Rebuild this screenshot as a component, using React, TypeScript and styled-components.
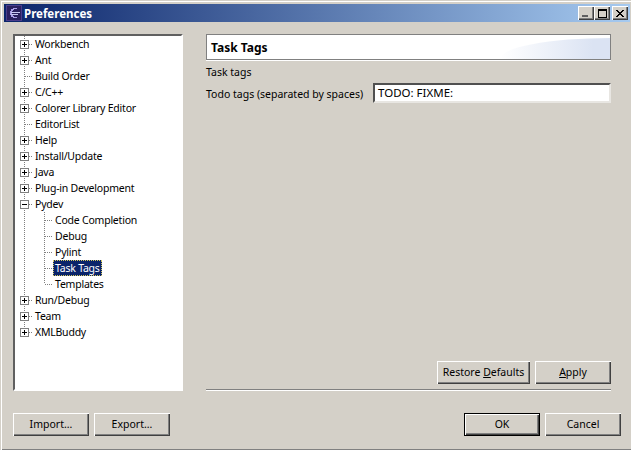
import { createGlobalStyle, styled } from "styled-components";
import { ReactNode } from "react";

const GlobalStyle = createGlobalStyle`
    html, body {
        margin: 0;
        padding: 0;
        background: #d4d0c8;
    }
    * {
        box-sizing: border-box;
    }
`;

const Window = styled.div`
    width: 631px;
    height: 450px;
    background: #d4d0c8;
    border-top: 1px solid #d4d0c8;
    border-left: 1px solid #d4d0c8;
    box-shadow: inset 1px 1px 0 #fff, inset 0 -1px 0 #808080;
    padding: 3px 1px 1px 3px;
    display: flex;
    flex-direction: column;
    font-family: "Noto Sans", Arial, sans-serif;
    font-size: 10.5px;
    color: #000;
    overflow: hidden;
`;

const TitleBar = styled.div`
    height: 18px;
    flex: none;
    display: flex;
    align-items: center;
    padding: 0 0 0 2px;
    background: linear-gradient(90deg, #0a246a, #a6caf0);
`;

const TitleText = styled.span`
    margin-left: 2px;
    flex: 1;
    color: #fff;
    font-weight: 700;
    font-size: 11.5px;
`;

const CaptionButton = styled.button<{ $gap?: boolean }>`
    width: 16px;
    height: 14px;
    padding: 0;
    margin-left: ${(p) => (p.$gap ? "2px" : "0")};
    margin-right: ${(p) => (p.$gap ? "2px" : "0")};
    border: 0;
    background: #d4d0c8;
    box-shadow: inset 1px 1px 0 #fff, inset -1px -1px 0 #404040, inset -2px -2px 0 #808080;
    display: flex;
    align-items: center;
    justify-content: center;
`;

const Body = styled.div`
    flex: 1;
    min-height: 0;
    display: grid;
    grid-template-columns: 170px 405px;
    column-gap: 23px;
    padding: 12px 0 22px 9px;
`;

const Tree = styled.div`
    height: 357px;
    background: #fff;
    border-style: solid;
    border-width: 2px;
    border-color: #606060 #fff #fff #606060;
    letter-spacing: -0.22px;
`;

const Row = styled.div`
    height: 16px;
    display: flex;
    align-items: center;
`;

const Guide = styled.span<{ $kind: "pipe" | "tee" | "elbow" }>`
    position: relative;
    width: 20px;
    height: 16px;
    flex: none;
    &::before {
        content: "";
        position: absolute;
        left: 9px;
        top: 0;
        width: 1px;
        height: ${(p) => (p.$kind === "elbow" ? "8px" : "16px")};
        background: repeating-linear-gradient(180deg, #808080 0 1px, transparent 1px 2px);
    }
    &::after {
        content: "";
        display: ${(p) => (p.$kind === "pipe" ? "none" : "block")};
        position: absolute;
        left: 10px;
        top: 8px;
        width: 8px;
        height: 1px;
        background: repeating-linear-gradient(90deg, #808080 0 1px, transparent 1px 2px);
    }
`;

const Expander = styled.span`
    position: absolute;
    z-index: 1;
    left: 5px;
    top: 4px;
    width: 9px;
    height: 9px;
    background: #fff;
    border: 1px solid #808080;
    display: flex;
    align-items: center;
    justify-content: center;
`;

const Label = styled.span<{ $selected?: boolean }>`
    height: 16px;
    line-height: 17px;
    margin-left: -2px;
    padding: 0 2px;
    white-space: nowrap;
    background: ${(p) => (p.$selected ? "#0a246a" : "transparent")};
    color: ${(p) => (p.$selected ? "#fff" : "#000")};
    outline: ${(p) => (p.$selected ? "1px dotted #d4c860" : "none")};
    outline-offset: -1px;
`;

const Page = styled.div`
    display: flex;
    flex-direction: column;
`;

const Banner = styled.div`
    position: relative;
    height: 26px;
    flex: none;
    display: flex;
    align-items: center;
    padding-left: 4px;
    font-weight: 700;
    font-size: 12px;
    border: 1px solid #808080;
    box-shadow: 0 1px 0 #fff;
    background: #fff;
    &::after {
        content: "";
        position: absolute;
        right: 0;
        bottom: 0;
        width: 110px;
        height: 21px;
        border-top-left-radius: 100% 100%;
        background: linear-gradient(90deg, #fff, #dbe3f3 85%);
    }
`;

const Heading = styled.div`
    height: 15px;
    line-height: 15px;
    margin-top: 5px;
`;

const FieldRow = styled.div`
    display: flex;
    align-items: center;
    justify-content: space-between;
    margin-top: 3px;
`;

const FieldLabel = styled.span`
    padding-top: 2px;
`;

const TextInput = styled.div`
    width: 238px;
    height: 20px;
    background: #fff;
    border-style: solid;
    border-width: 2px;
    border-color: #505050 #e8e6e2 #e8e6e2 #505050;
    padding-left: 3px;
    line-height: 15px;
    font-size: 11.5px;
`;

const Spacer = styled.div`
    flex: 1;
`;

const PageActions = styled.div`
    display: flex;
    justify-content: flex-end;
    gap: 5px;
`;

const Button = styled.button<{ $width: number; $default?: boolean }>`
    width: ${(p) => p.$width}px;
    height: 23px;
    padding: 0 0 2px;
    font: inherit;
    color: #000;
    background: #d4d0c8;
    border: ${(p) => (p.$default ? "1px solid #000" : "0")};
    box-shadow: inset 1px 1px 0 #fff, inset -1px -1px 0 #404040, inset -2px -2px 0 #808080;
    u {
        text-underline-offset: 1px;
    }
`;

const Separator = styled.div`
    height: 2px;
    margin-top: 5px;
    flex: none;
    background: linear-gradient(180deg, #808080 0 1px, #fff 1px 2px);
`;

const Footer = styled.div`
    display: flex;
    justify-content: space-between;
    padding: 0 9px 13px 9px;
`;

const ButtonGroup = styled.div`
    display: flex;
    gap: 5px;
`;

function Sign({ open }: { open?: boolean }) {
    return (
        <Expander>
            <svg width="5" height="5" viewBox="0 0 5 5" shapeRendering="crispEdges">
                <path d="M0 2h5v1H0z" fill="#000" />
                {!open && <path d="M2 0h1v5H2z" fill="#000" />}
            </svg>
        </Expander>
    );
}

type Node = { label: string; sign?: "plus" | "minus"; kids?: string[] };

const nodes: Node[] = [
    { label: "Workbench", sign: "plus" },
    { label: "Ant", sign: "plus" },
    { label: "Build Order" },
    { label: "C/C++", sign: "plus" },
    { label: "Colorer Library Editor", sign: "plus" },
    { label: "EditorList" },
    { label: "Help", sign: "plus" },
    { label: "Install/Update", sign: "plus" },
    { label: "Java", sign: "plus" },
    { label: "Plug-in Development", sign: "plus" },
    {
        label: "Pydev",
        sign: "minus",
        kids: ["Code Completion", "Debug", "Pylint", "Task Tags", "Templates"],
    },
    { label: "Run/Debug", sign: "plus" },
    { label: "Team", sign: "plus" },
    { label: "XMLBuddy", sign: "plus" },
];

function TreeRows() {
    const rows: ReactNode[] = [];
    nodes.forEach((node, i) => {
        const last = i === nodes.length - 1;
        rows.push(
            <Row key={node.label}>
                <Guide $kind={last ? "elbow" : "tee"}>
                    {node.sign && <Sign open={node.sign === "minus"} />}
                </Guide>
                <Label>{node.label}</Label>
            </Row>
        );
        node.kids?.forEach((kid, k) => {
            rows.push(
                <Row key={kid}>
                    <Guide $kind="pipe" />
                    <Guide $kind={k === node.kids!.length - 1 ? "elbow" : "tee"} />
                    <Label $selected={kid === "Task Tags"}>{kid}</Label>
                </Row>
            );
        });
    });
    return <>{rows}</>;
}

function EclipseIcon() {
    return (
        <svg width="16" height="16" viewBox="0 0 16 16" shapeRendering="crispEdges">
            <rect width="16" height="16" fill="#4a3c8c" />
            <rect x="1" y="1" width="14" height="14" fill="#2a2060" />
            <path d="M7 3h4v1H8v1H7v1H6v4h1v1h1v1h3v1H7v-1H5v-2H4V6h1V4h2z" fill="#a89ce8" />
            <path d="M5 7h9v1H5zM5 9h7v1H5z" fill="#c8c8f4" />
        </svg>
    );
}

export default function App() {
    return (
        <>
            <GlobalStyle />
            <Window>
                <TitleBar>
                    <EclipseIcon />
                    <TitleText>Preferences</TitleText>
                    <CaptionButton aria-label="Minimize">
                        <svg width="8" height="8" viewBox="0 0 8 8" shapeRendering="crispEdges">
                            <path d="M0 6h6v2H0z" fill="#606060" />
                        </svg>
                    </CaptionButton>
                    <CaptionButton aria-label="Maximize">
                        <svg width="9" height="9" viewBox="0 0 9 9" shapeRendering="crispEdges">
                            <path d="M0 0h9v9H0zM1 2v6h7V2z" fill="#000" fillRule="evenodd" />
                        </svg>
                    </CaptionButton>
                    <CaptionButton $gap aria-label="Close">
                        <svg width="8" height="7" viewBox="0 0 8 7" shapeRendering="crispEdges">
                            <path
                                d="M0 0h2v1h1v1h2V1h1V0h2v1H7v1H6v1H5v1h1v1h1v1h1v1H6V6H5V5H3v1H2v1H0V6h1V5h1V4h1V3H2V2H1V1H0z"
                                fill="#000"
                            />
                        </svg>
                    </CaptionButton>
                </TitleBar>
                <Body>
                    <Tree>
                        <TreeRows />
                    </Tree>
                    <Page>
                        <Banner>Task Tags</Banner>
                        <Heading>Task tags</Heading>
                        <FieldRow>
                            <FieldLabel>Todo tags (separated by spaces)</FieldLabel>
                            <TextInput>TODO: FIXME:</TextInput>
                        </FieldRow>
                        <Spacer />
                        <PageActions>
                            <Button $width={93}>
                                Restore <u>D</u>efaults
                            </Button>
                            <Button $width={76}>
                                <u>A</u>pply
                            </Button>
                        </PageActions>
                        <Separator />
                    </Page>
                </Body>
                <Footer>
                    <ButtonGroup>
                        <Button $width={76}>Import...</Button>
                        <Button $width={76}>Export...</Button>
                    </ButtonGroup>
                    <ButtonGroup>
                        <Button $width={76} $default>
                            OK
                        </Button>
                        <Button $width={76}>Cancel</Button>
                    </ButtonGroup>
                </Footer>
            </Window>
        </>
    );
}
